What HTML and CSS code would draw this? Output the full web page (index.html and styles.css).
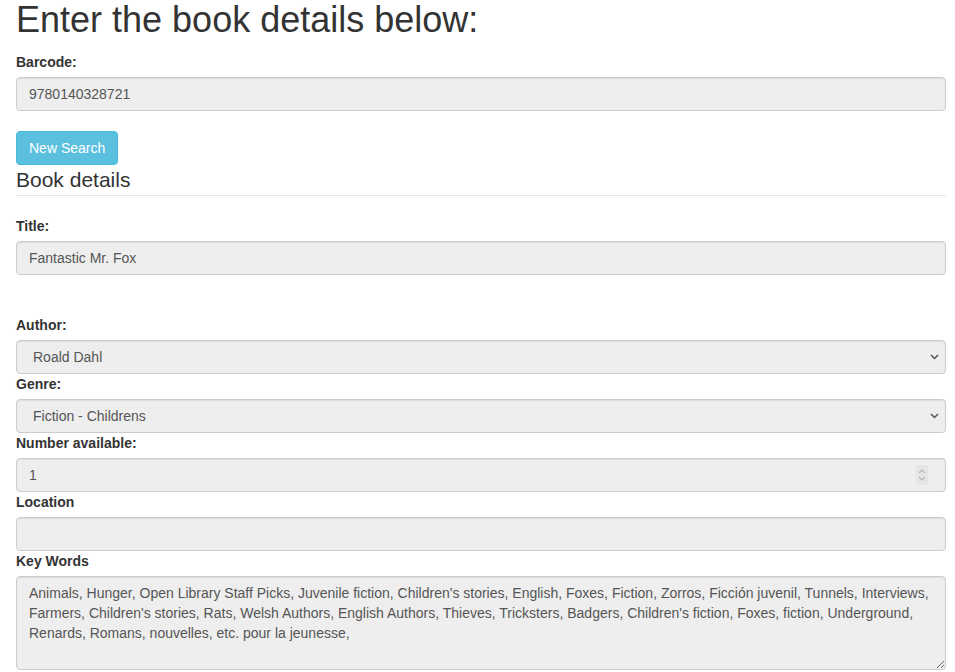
FILE: index.html
```html
<!DOCTYPE html>
<html lang="en">
<head>
    <meta charset="UTF-8">
    <meta name="viewport" content="width=device-width, initial-scale=1.0">
    <title>Book Details</title>
    <link rel="stylesheet" href="styles.css">
</head>
<body>
    <div class="container">
        <h1>Enter the book details below:</h1>
        <div class="form-group barcode-group">
            <label for="barcode">Barcode:</label>
            <input type="text" id="barcode" class="form-control" value="9780140328721" disabled>
        </div>
        <button class="btn btn-info">New Search</button>

        <fieldset>
            <legend>Book details</legend>
            <div class="form-group title-group">
                <label for="title">Title:</label>
                <input type="text" id="title" class="form-control" value="Fantastic Mr. Fox" disabled>
            </div>

            <label for="author">Author:</label>
            <select id="author" class="form-control" disabled>
                <option>Roald Dahl</option>
            </select>
            <label for="genre">Genre:</label>
            <select id="genre" class="form-control" disabled>
                <option>Fiction - Childrens</option>
            </select>
            <label for="available">Number available:</label>
            <input type="number" id="available" class="form-control" value="1" disabled>
            <label for="location">Location</label>
            <input type="text" id="location" class="form-control" disabled>
            <label for="keywords">Key Words</label>
            <textarea id="keywords" class="form-control" rows="4" disabled>Animals, Hunger, Open Library Staff Picks, Juvenile fiction, Children's stories, English, Foxes, Fiction, Zorros, Ficción juvenil, Tunnels, Interviews, Farmers, Children's stories, Rats, Welsh Authors, English Authors, Thieves, Tricksters, Badgers, Children's fiction, Foxes, fiction, Underground, Renards, Romans, nouvelles, etc. pour la jeunesse,</textarea>
        </fieldset>
    </div>
</body>
</html>
```

FILE: styles.css
```css
body {
    margin: 0;
    font-family: "Liberation Sans", Arial, sans-serif;
    font-size: 14px;
    line-height: 1.42857143;
    color: #333;
    background: #fff;
}
.container {
    width: 930px;
    padding-left: 16px;
}
h1 {
    font-size: 36px;
    font-weight: 400;
    line-height: 1.1;
    margin: 0 0 12px 0;
}
label {
    display: block;
    font-weight: bold;
    margin-bottom: 5px;
}
.form-group {
    margin-bottom: 20px;
}
.title-group {
    margin-bottom: 40px;
}
.form-control {
    display: block;
    box-sizing: border-box;
    width: 100%;
    height: 34px;
    padding: 6px 12px;
    margin: 0;
    font-family: inherit;
    font-size: 14px;
    line-height: 1.42857143;
    color: #555;
    background-color: #eee;
    border: 1px solid #ccc;
    border-radius: 4px;
    box-shadow: inset 0 1px 1px rgba(0, 0, 0, .075);
    opacity: 1;
}
select.form-control {
    appearance: none;
    -webkit-appearance: none;
    padding-left: 16px;
    background-image: url("data:image/svg+xml,%3Csvg xmlns='http://www.w3.org/2000/svg' width='9' height='6' viewBox='0 0 9 6'%3E%3Cpath d='M1 1l3.5 3.5L8 1' fill='none' stroke='%23555' stroke-width='1.5'/%3E%3C/svg%3E");
    background-repeat: no-repeat;
    background-position: right 6px center;
}
input[type="number"].form-control {
    -moz-appearance: textfield;
    background-image: url("data:image/svg+xml,%3Csvg xmlns='http://www.w3.org/2000/svg' width='12' height='20' viewBox='0 0 12 20'%3E%3Crect width='12' height='20' fill='%23e5e5e5'/%3E%3Cpath d='M3 8l3-3 3 3M3 12l3 3 3-3' fill='none' stroke='%23b5b5b5' stroke-width='1.2'/%3E%3C/svg%3E");
    background-repeat: no-repeat;
    background-position: right 17px center;
}
input[type="number"]::-webkit-inner-spin-button,
input[type="number"]::-webkit-outer-spin-button {
    -webkit-appearance: none;
    margin: 0;
}
textarea.form-control {
    height: auto;
    resize: vertical;
    display: block;
}
.btn {
    display: block;
    padding: 6px 12px;
    font-family: inherit;
    font-size: 14px;
    line-height: 1.42857143;
    border: 1px solid transparent;
    border-radius: 4px;
    cursor: pointer;
}
.btn-info {
    color: #fff;
    background-color: #5bc0de;
    border-color: #46b8da;
}
fieldset {
    border: 0;
    margin: 0;
    padding: 0;
    min-width: 0;
}
legend {
    display: block;
    width: 100%;
    padding: 0;
    margin-bottom: 20px;
    font-size: 21px;
    line-height: inherit;
    color: #333;
    border: 0;
    border-bottom: 1px solid #e5e5e5;
}
```
